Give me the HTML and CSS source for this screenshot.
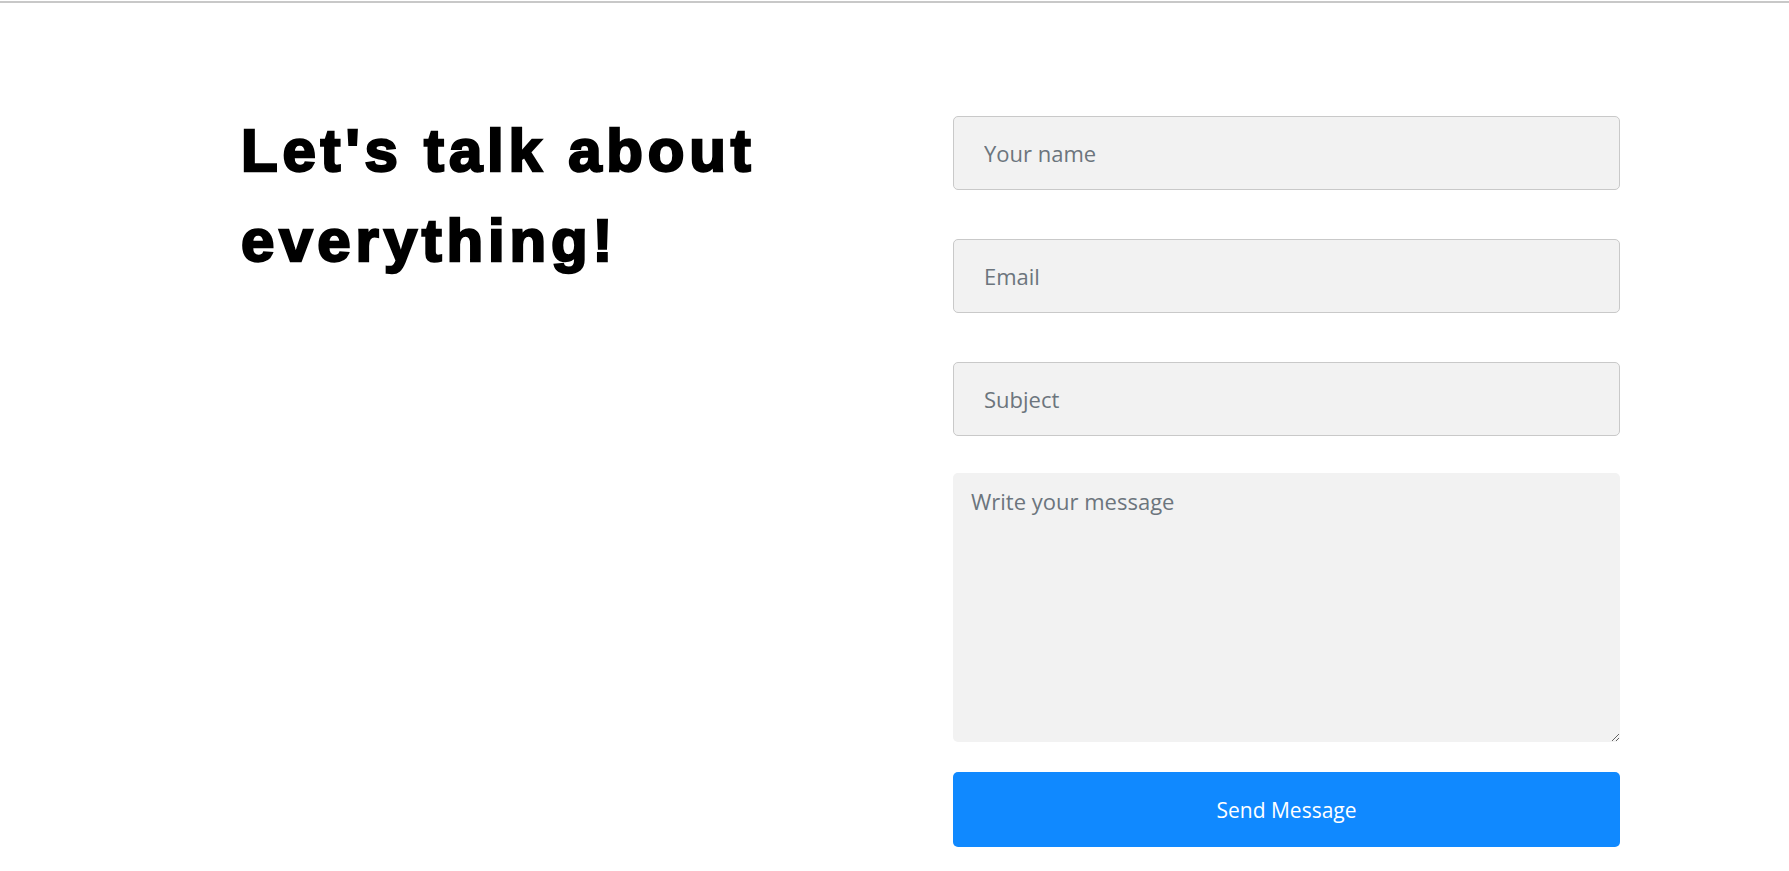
FILE: index.html
```html
<!DOCTYPE html>
<html lang="en">
<head>
<meta charset="utf-8">
<title>Contact</title>
<link rel="stylesheet" href="styles.css">
</head>
<body>
<div class="topline"></div>
<section class="contact">
  <div class="intro">
    <h1 class="title">Let's talk about everything!</h1>
  </div>
  <form class="form">
    <input class="field" type="text" placeholder="Your name">
    <input class="field" type="email" placeholder="Email">
    <input class="field" type="text" placeholder="Subject">
    <textarea class="message" placeholder="Write your message"></textarea>
    <button class="send" type="button">Send Message</button>
  </form>
</section>
</body>
</html>
```
FILE: styles.css
```css
* {
  box-sizing: border-box;
}

html, body {
  margin: 0;
  padding: 0;
  background: #ffffff;
}

body {
  font-family: "Open Sans", "Noto Sans", sans-serif;
  overflow: hidden;
}

.topline {
  margin-top: 1px;
  height: 2px;
  background: #c8c8c8;
}

.contact {
  display: flex;
  padding: 103px 0 0 241px;
}

.intro {
  width: 712px;
  flex: none;
}

.title {
  margin: 0;
  font-family: "Liberation Sans", Arial, sans-serif;
  font-weight: 700;
  font-size: 60px;
  line-height: 90px;
  letter-spacing: 4.8px;
  color: #000;
  -webkit-text-stroke: 2.4px #000;
}

.form {
  width: 667px;
  flex: none;
  margin-top: 10px;
  display: flex;
  flex-direction: column;
}

.field {
  height: 74px;
  margin: 0 0 49px;
  padding: 0 30px;
  border: 1px solid #c9c9c9;
  border-radius: 5px;
  background: #f2f2f2;
  font-family: "Open Sans", "Noto Sans", sans-serif;
  font-size: 22px;
  color: #212529;
  outline: none;
}

.field:nth-of-type(3) {
  margin-bottom: 37px;
}

.field::placeholder,
.message::placeholder {
  color: #6c757d;
  opacity: 1;
}

.message {
  height: 269px;
  margin: 0 0 30px;
  padding: 12px 18px;
  border: none;
  border-radius: 5px;
  background: #f2f2f2;
  font-family: "Open Sans", "Noto Sans", sans-serif;
  font-size: 22px;
  line-height: 33px;
  color: #212529;
  outline: none;
}

.send {
  height: 75px;
  border: none;
  border-radius: 5px;
  background: #1089ff;
  color: #ffffff;
  font-family: "Open Sans", "Noto Sans", sans-serif;
  font-size: 21px;
  cursor: pointer;
}
```
